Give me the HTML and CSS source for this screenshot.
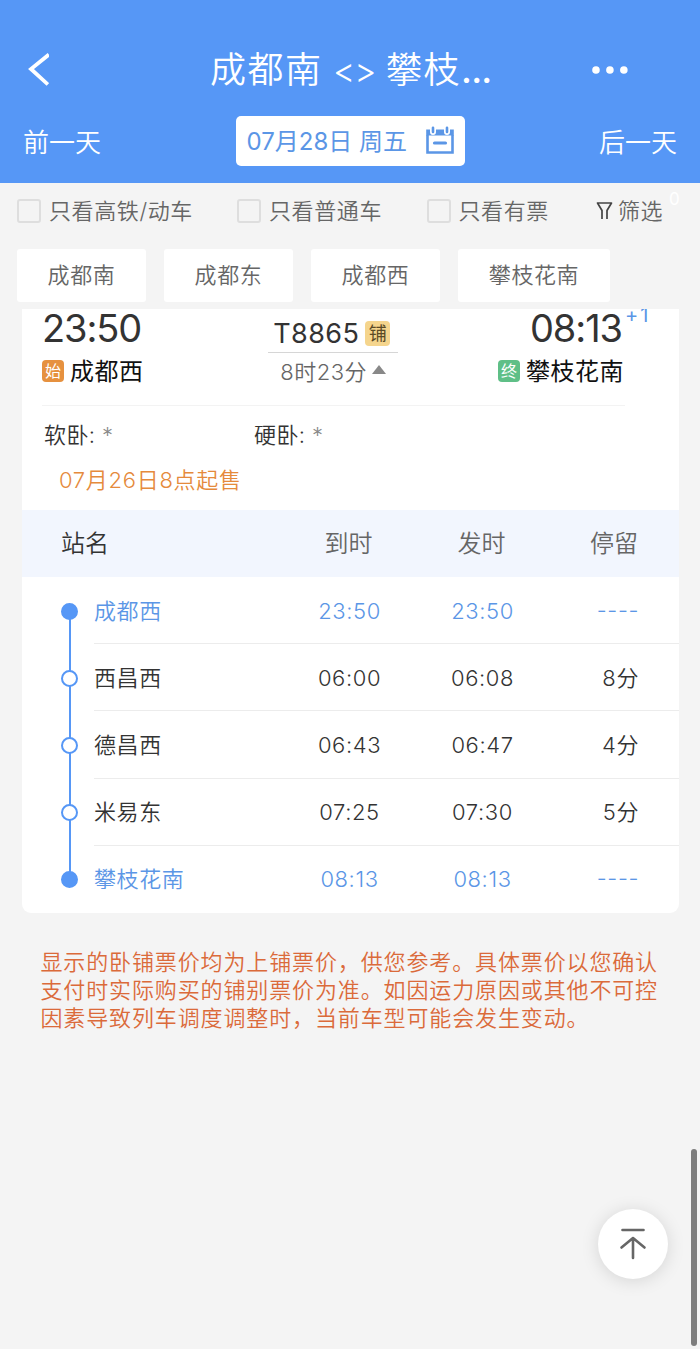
FILE: index.html
```
<!DOCTYPE html>
<html lang="zh-CN">

<head>
    <meta charset="UTF-8">
    <meta name="viewport" content="width=device-width, initial-scale=1.0">
    <title>成都南 - 攀枝花南</title>
    <link rel="stylesheet" href="styles.css">
</head>

<body>
    <header class="header">
        <div class="title-bar">
            <svg class="back" viewBox="0 0 24 34" width="24" height="34">
                <path d="M24 1.500 L6 16 L23 31.500" fill="none" stroke="#fff" stroke-width="3.8" />
            </svg>
            <h1>成都南 <span class="arrows">&lt;&gt;</span> 攀枝<span class="dots">...</span></h1>
            <svg class="more" viewBox="0 0 36 10" width="36" height="10" fill="#fff">
                <circle cx="4" cy="5" r="3.8" />
                <circle cx="18" cy="5" r="3.8" />
                <circle cx="32" cy="5" r="3.8" />
            </svg>
        </div>
        <div class="date-bar">
            <span>前一天</span>
            <div class="date">
                <span>07月28日 周五</span>
                <svg viewBox="0 0 30 30" width="30" height="30">
                    <path d="M2.500 9 V26.500 H27.500 V9" fill="none" stroke="#5b96e6" stroke-width="2.6" />
                    <path d="M1.200 3.500 H28.800 V9.500 H1.200 Z" fill="#5b96e6" />
                    <path d="M8 2 V6 M22 2 V6" stroke="#fff" stroke-width="6" stroke-linecap="round" />
                    <path d="M8 1.800 V6 M22 1.800 V6" stroke="#5b96e6" stroke-width="2.6" stroke-linecap="round" />
                    <path d="M9.500 17 H20.500" stroke="#5b96e6" stroke-width="3.2" stroke-linecap="round" />
                </svg>
            </div>
            <span>后一天</span>
        </div>
    </header>

    <div class="filters">
        <label class="check speed"><i></i><span>只看高铁/动车</span></label>
        <label class="check normal"><i></i><span>只看普通车</span></label>
        <label class="check ticket"><i></i><span>只看有票</span></label>
        <div class="filter">
            <svg viewBox="0 0 17 20" width="17" height="20">
                <path d="M6 18 V9.500 L1.500 2 H15.500 L11 9.500 V18" fill="none" stroke="#444" stroke-width="1.7" stroke-linejoin="round" />
            </svg>
            <span>筛选</span>
            <b class="count">0</b>
        </div>
    </div>

    <div class="stations">
        <span>成都南</span>
        <span>成都东</span>
        <span>成都西</span>
        <span class="wide">攀枝花南</span>
    </div>

    <main class="card">
        <section class="train">
            <div class="from">
                <div class="time">23:50</div>
                <div class="place"><b class="tag start">始</b>成都西</div>
            </div>
            <div class="middle">
                <div class="number">T8865<b class="tag berth">铺</b></div>
                <div class="line"></div>
                <div class="duration">8时23分<i class="up"></i></div>
            </div>
            <div class="to">
                <div class="time">08:13<sup>+1</sup></div>
                <div class="place"><b class="tag end">终</b>攀枝花南</div>
            </div>
        </section>

        <div class="seats">
            <span>软卧: <em>*</em></span>
            <span>硬卧: <em>*</em></span>
        </div>
        <p class="sale">07月26日8点起售</p>

        <div class="row head">
            <span class="name">站名</span>
            <span>到时</span>
            <span>发时</span>
            <span class="stay">停留</span>
        </div>
        <ul class="stops">
            <li class="row active">
                <i class="dot"></i>
                <span class="name">成都西</span>
                <span>23:50</span>
                <span>23:50</span>
                <span class="stay dash">----</span>
            </li>
            <li class="row">
                <i class="dot"></i>
                <span class="name">西昌西</span>
                <span>06:00</span>
                <span>06:08</span>
                <span class="stay">8分</span>
            </li>
            <li class="row">
                <i class="dot"></i>
                <span class="name">德昌西</span>
                <span>06:43</span>
                <span>06:47</span>
                <span class="stay">4分</span>
            </li>
            <li class="row">
                <i class="dot"></i>
                <span class="name">米易东</span>
                <span>07:25</span>
                <span>07:30</span>
                <span class="stay">5分</span>
            </li>
            <li class="row active">
                <i class="dot"></i>
                <span class="name">攀枝花南</span>
                <span>08:13</span>
                <span>08:13</span>
                <span class="stay dash">----</span>
            </li>
        </ul>
    </main>

    <p class="notice">显示的卧铺票价均为上铺票价，供您参考。具体票价以您确认支付时实际购买的铺别票价为准。如因运力原因或其他不可控因素导致列车调度调整时，当前车型可能会发生变动。</p>

    <div class="to-top">
        <svg viewBox="0 0 28 34" width="28" height="34" fill="none" stroke="#666" stroke-width="2.6" stroke-linecap="round">
            <path d="M3.500 3 H24.500" />
            <path d="M14 11 V31 M2.500 20.500 L14 11 L25.500 20.500" stroke-linejoin="round" />
        </svg>
    </div>
    <div class="scrollbar"></div>
</body>

</html>
```
FILE: styles.css
```
:root {
    --blue: #5697f6;
    --link: #5b96e6;
}

* {
    box-sizing: border-box;
}

body {
    margin: 0;
    min-height: 1349px;
    position: relative;
    background: #f4f4f4;
    color: #333;
    font-family: Inter, "Noto Sans CJK SC", sans-serif;
    font-size: 22px;
    font-weight: 350;
    overflow: hidden;
}

i, em {
    font-style: normal;
}

.header {
    height: 183px;
    padding-top: 40px;
    background: var(--blue);
    color: #fff;
}

.title-bar {
    display: flex;
    align-items: center;
    height: 60px;
    padding: 0 72px 0 25px;
}

h1 {
    width: 282px;
    margin: 0 101px 0 161px;
    padding-bottom: 6px;
    font-size: 36px;
    font-weight: 350;
    letter-spacing: 1.5px;
    white-space: nowrap;
}

.arrows {
    margin: 0 -1px 0 -1px;
    font-size: 34px;
    letter-spacing: -1px;
}

.dots {
    font-weight: 500;
    letter-spacing: -0.9px;
}

.date-bar {
    display: flex;
    align-items: center;
    justify-content: space-between;
    height: 51px;
    margin-top: 15px;
    padding: 0 23px;
    font-size: 26px;
}

.date {
    display: flex;
    align-items: center;
    justify-content: space-between;
    width: 229px;
    height: 50px;
    padding: 0 10px 0 11px;
    border-radius: 5px;
    background: #fff;
    color: var(--link);
    font-size: 24px;
    font-weight: 400;
    white-space: nowrap;
}

.date span {
    padding-bottom: 2px;
}

.filters {
    display: flex;
    align-items: center;
    height: 56px;
    padding-left: 17px;
    color: #666;
    white-space: nowrap;
}

.filters span {
    padding-bottom: 4px;
}

.check {
    display: flex;
    align-items: center;
    letter-spacing: 0.6px;
}

.check i {
    width: 24px;
    height: 24px;
    margin-right: 8px;
    border: 2px solid #dedede;
    border-radius: 3px;
}

.speed {
    width: 220px;
}

.normal {
    width: 189.5px;
}

.ticket {
    width: 169.5px;
}

.filter {
    display: flex;
    align-items: center;
    position: relative;
    gap: 5px;
    letter-spacing: 0.6px;
}

.count {
    position: absolute;
    left: 73px;
    top: -4px;
    color: #fff;
    font-size: 17px;
    font-weight: 400;
}

.stations {
    display: flex;
    gap: 18px;
    margin-top: 10px;
    padding-left: 17px;
    color: #666;
    letter-spacing: 0.6px;
}

.stations span {
    width: 129px;
    height: 53px;
    border-radius: 3px;
    background: #fff;
    line-height: 53px;
    text-align: center;
}

.stations .wide {
    width: 152px;
}

.card {
    width: 657px;
    height: 604px;
    margin: 7px 0 0 22px;
    border-radius: 0 0 9px 9px;
    background: #fff;
    overflow: hidden;
}

.train {
    display: flex;
    justify-content: space-between;
    height: 97px;
    margin: 0 54px 0 20px;
    border-bottom: 1px solid #f3f3f3;
}

.time {
    height: 38px;
    font-size: 38px;
    font-weight: 400;
    letter-spacing: -1.1px;
    line-height: 38px;
    position: relative;
}

.time sup {
    position: absolute;
    left: 100%;
    top: -4px;
    color: var(--link);
    font-size: 20px;
    letter-spacing: 2px;
    line-height: 20px;
}

.place {
    display: flex;
    align-items: center;
    height: 45px;
    color: #111;
    font-size: 24px;
    font-weight: 400;
    letter-spacing: 0.5px;
}

.tag {
    width: 22px;
    height: 22px;
    margin: 2px 6px 0 0;
    border-radius: 4px;
    color: #fff;
    font-size: 16px;
    font-weight: 400;
    letter-spacing: 0;
    line-height: 22px;
    text-align: center;
}

.start {
    background: #e6913f;
}

.end {
    background: #5fbf87;
}

.to .time {
    width: 95px;
    margin-left: auto;
}

.to .place {
    margin-right: 1px;
}

.middle {
    width: 130px;
    margin-left: 25px;
}

.number {
    display: flex;
    align-items: center;
    height: 43px;
    padding: 6px 0 0 5px;
    font-size: 27px;
    font-weight: 400;
    letter-spacing: 0.4px;
}

.berth {
    width: 25px;
    height: 25px;
    margin: 0 0 0 6px;
    background: #f5d58d;
    color: #5b4a25;
    font-size: 18px;
    line-height: 25px;
}

.line {
    height: 1px;
    background: #d6d6d6;
}

.duration {
    display: flex;
    align-items: center;
    height: 33px;
    padding-left: 12px;
    color: #666;
    letter-spacing: 0.5px;
}

.up {
    margin-left: 5px;
    border: 7px solid transparent;
    border-top: 0;
    border-bottom: 9px solid #888;
}

.seats {
    display: flex;
    height: 58px;
    padding-left: 22px;
    letter-spacing: 0.4px;
    line-height: 59px;
}

.seats span {
    width: 210px;
}

.seats em {
    color: #888;
}

.sale {
    height: 46px;
    margin: 0;
    padding-left: 37px;
    color: #e58a3c;
    line-height: 33px;
    letter-spacing: 0.7px;
}

.row {
    display: flex;
    align-items: center;
    position: relative;
    height: 67.2px;
}

.row span {
    width: 133px;
    text-align: center;
}

.row .name {
    width: 189px;
    padding-bottom: 4px;
    text-align: left;
}

.row .stay {
    width: 90px;
    padding-bottom: 4px;
    text-align: right;
}

.row .dash {
    padding-bottom: 2px;
}

.head {
    height: 67px;
    padding-left: 39px;
    background: #f2f6fe;
    color: #666;
    font-size: 24px;
}

.head span {
    padding-bottom: 4px;
}

.head .name {
    width: 221px;
    color: #333;
}

.stops {
    margin: 0;
    padding: 0;
    list-style: none;
}

.stops .row {
    padding-left: 72px;
    letter-spacing: 0.6px;
}

.stops .row span {
    flex-shrink: 0;
}

.stops .active {
    color: var(--link);
}

.dot {
    position: absolute;
    left: 39px;
    top: 25.5px;
    z-index: 1;
    width: 17px;
    height: 17px;
    border: 2px solid var(--blue);
    border-radius: 50%;
    background: #fff;
}

.active .dot {
    background: var(--blue);
}

/* line to the next stop */
.stops .row:not(:last-child)::before {
    content: "";
    position: absolute;
    left: 46.5px;
    top: 34px;
    width: 2px;
    height: 67.2px;
    background: var(--blue);
}

/* divider */
.stops .row:not(:last-child)::after {
    content: "";
    position: absolute;
    left: 72px;
    right: 0;
    bottom: 0;
    height: 1px;
    background: #ececec;
}

.notice {
    width: 630px;
    margin: 35px 0 0 40.5px;
    color: #db6a3a;
    letter-spacing: 0.87px;
    line-height: 28px;
}

.to-top {
    display: flex;
    align-items: center;
    justify-content: center;
    position: absolute;
    left: 598px;
    top: 1209px;
    width: 70px;
    height: 70px;
    border-radius: 50%;
    background: #fff;
    box-shadow: 0 2px 18px rgba(0, 0, 0, 0.13);
}

.scrollbar {
    position: absolute;
    left: 691px;
    top: 1149px;
    width: 6px;
    height: 197px;
    border-radius: 3px;
    background: #7d7d7d;
}
```
